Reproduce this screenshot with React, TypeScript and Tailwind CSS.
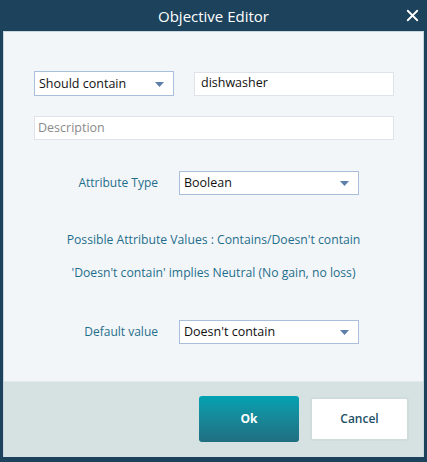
import { X } from 'lucide-react';

function Caret() {
  return (
    <svg width="9" height="5" viewBox="0 0 9 5" className="shrink-0">
      <path d="M0 0 H9 L4.5 5 Z" fill="#5b7fa8" />
    </svg>
  );
}

function Select({ value, className }: { value: string; className: string }) {
  return (
    <div
      className={
        'flex items-center justify-between bg-white border border-[#a9bfdb] pl-[4px] pr-[9px] pt-[1px] text-[12.5px] text-[#111] ' +
        className
      }
    >
      <span>{value}</span>
      <Caret />
    </div>
  );
}

export default function App() {
  return (
    <div
      className="w-[427px] h-[462px] bg-[#1c425c] flex flex-col"
      style={{ fontFamily: '"Open Sans", "Noto Sans", sans-serif' }}
    >
      <div className="h-[31px] flex items-center relative">
        <div className="flex-1 text-center text-white text-[15px] pt-[1px]">Objective Editor</div>
        <X className="absolute right-[5px] top-[6px] text-white" size={19} strokeWidth={2.3} />
      </div>

      <div className="mx-[3px] mb-[5px] flex-1 flex flex-col border-t border-l border-r border-[#c9d5e0]">
        <div className="h-[349px] bg-[#f3f6f9] flex flex-col pl-[30px] pt-[39px]">
          <div className="flex items-center gap-[20px]">
            <Select value="Should contain" className="w-[140px] h-[25px]" />
            <div className="w-[200px] h-[24px] bg-white border border-[#dfe3ea] flex items-center px-[6px] text-[12.5px] text-[#111]">
              dishwasher
            </div>
          </div>

          <div className="mt-[20px] w-[360px] h-[24px] bg-white border border-[#dfe3ea] flex items-center px-[3px] text-[12.5px] text-[#8a8a8a]">
            Description
          </div>

          <div className="mt-[31px] flex items-center">
            <div className="w-[124px] text-right text-[12px] text-[#1f6e8b]">Attribute Type</div>
            <Select value="Boolean" className="ml-[21px] w-[180px] h-[24px]" />
          </div>

          <div className="mt-[37px] -ml-[30px] text-center text-[12.2px] text-[#1f6e8b] leading-[16px]">
            Possible Attribute Values : Contains/Doesn't contain
          </div>
          <div className="mt-[17px] -ml-[30px] text-center text-[12.2px] text-[#1f6e8b] leading-[16px]">
            'Doesn't contain' implies Neutral (No gain, no loss)
          </div>

          <div className="mt-[39px] flex items-center">
            <div className="w-[124px] text-right text-[12px] text-[#1f6e8b]">Default value</div>
            <Select value="Doesn't contain" className="ml-[21px] w-[180px] h-[24px]" />
          </div>
        </div>

        <div className="flex-1 bg-[#d6e2e2] border-t border-[#e4eaea] flex items-center justify-end gap-[11px] pr-[14px] pb-[1px]">
          <button className="w-[100px] h-[46px] rounded-[3px] bg-gradient-to-b from-[#00a2b2] to-[#1e6e80] text-white text-[12px] font-bold">
            Ok
          </button>
          <button className="w-[99px] h-[44px] rounded-[3px] bg-white border-2 border-[#cfdcdc] text-[#1d4f66] text-[12px] font-semibold">
            Cancel
          </button>
        </div>
      </div>
    </div>
  );
}
